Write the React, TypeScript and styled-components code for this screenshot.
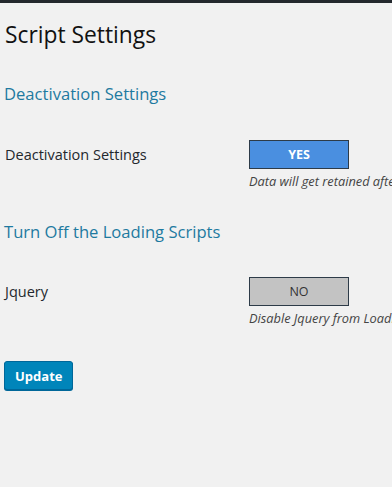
import React from 'react';
import styled, { createGlobalStyle } from 'styled-components';

const GlobalStyle = createGlobalStyle`
	html, body {
		margin: 0;
		padding: 0;
		background: #f1f1f1;
	}
	body {
		font-family: 'Open Sans', 'Liberation Sans', sans-serif;
		color: #23282d;
		overflow: hidden;
	}
`;

const Page = styled.div`
	border-top: 3px solid #23282d;
	min-height: 484px;
	padding: 0 4px;
	overflow: hidden;
`;

const Title = styled.h1`
	font-size: 22.8px;
	font-weight: 400;
	line-height: 29px;
	margin: 17px 0 0 1px;
	color: #111;
`;

const Section = styled.h2<{ $top: number }>`
	font-size: 16.6px;
	font-weight: 500;
	color: #1e7aa0;
	line-height: 22px;
	margin: ${(p) => p.$top}px 0 0 0;
`;

const Row = styled.div<{ $top: number }>`
	display: grid;
	grid-template-columns: 245px 1fr;
	margin-top: ${(p) => p.$top}px;
	white-space: nowrap;
`;

const Label = styled.div`
	font-size: 14.5px;
	color: #23282d;
	padding-top: 5px;
	padding-left: 1px;
`;

const Field = styled.div`
	display: flex;
	flex-direction: column;
	align-items: flex-start;
`;

const Toggle = styled.button<{ $on?: boolean }>`
	width: 100px;
	height: 29px;
	box-sizing: border-box;
	border: 1px solid #2d3b48;
	background: ${(p) => (p.$on ? '#4a8fe0' : '#c3c3c3')};
	color: ${(p) => (p.$on ? '#fff' : '#333')};
	font-family: 'Open Sans', 'Liberation Sans', sans-serif;
	font-size: 12.5px;
	font-weight: ${(p) => (p.$on ? 700 : 400)};
	padding: 0;
	margin: 0;
`;

const Hint = styled.div`
	font-size: 12.8px;
	font-style: italic;
	color: #444;
	margin-top: 3px;
`;

const Submit = styled.button`
	margin-top: 34px;
	height: 29px;
	padding: 0 10px;
	border: 1px solid #006799;
	border-radius: 3px;
	background: #0085ba;
	box-shadow: 0 1px 0 #006799;
	color: #fff;
	font-family: 'Open Sans', 'Liberation Sans', sans-serif;
	font-size: 13px;
	font-weight: 700;
`;

export default function App() {
	return (
		<React.Fragment>
			<GlobalStyle />
			<Page>
				<Title>Script Settings</Title>
				<Section $top={34}>Deactivation Settings</Section>
				<Row $top={35}>
					<Label>Deactivation Settings</Label>
					<Field>
						<Toggle $on>YES</Toggle>
						<Hint>Data will get retained after plugin deactivation</Hint>
					</Field>
				</Row>
				<Section $top={31}>Turn Off the Loading Scripts</Section>
				<Row $top={34}>
					<Label>Jquery</Label>
					<Field>
						<Toggle>NO</Toggle>
						<Hint>Disable Jquery from Loading on the site</Hint>
					</Field>
				</Row>
				<Submit>Update</Submit>
			</Page>
		</React.Fragment>
	);
}
